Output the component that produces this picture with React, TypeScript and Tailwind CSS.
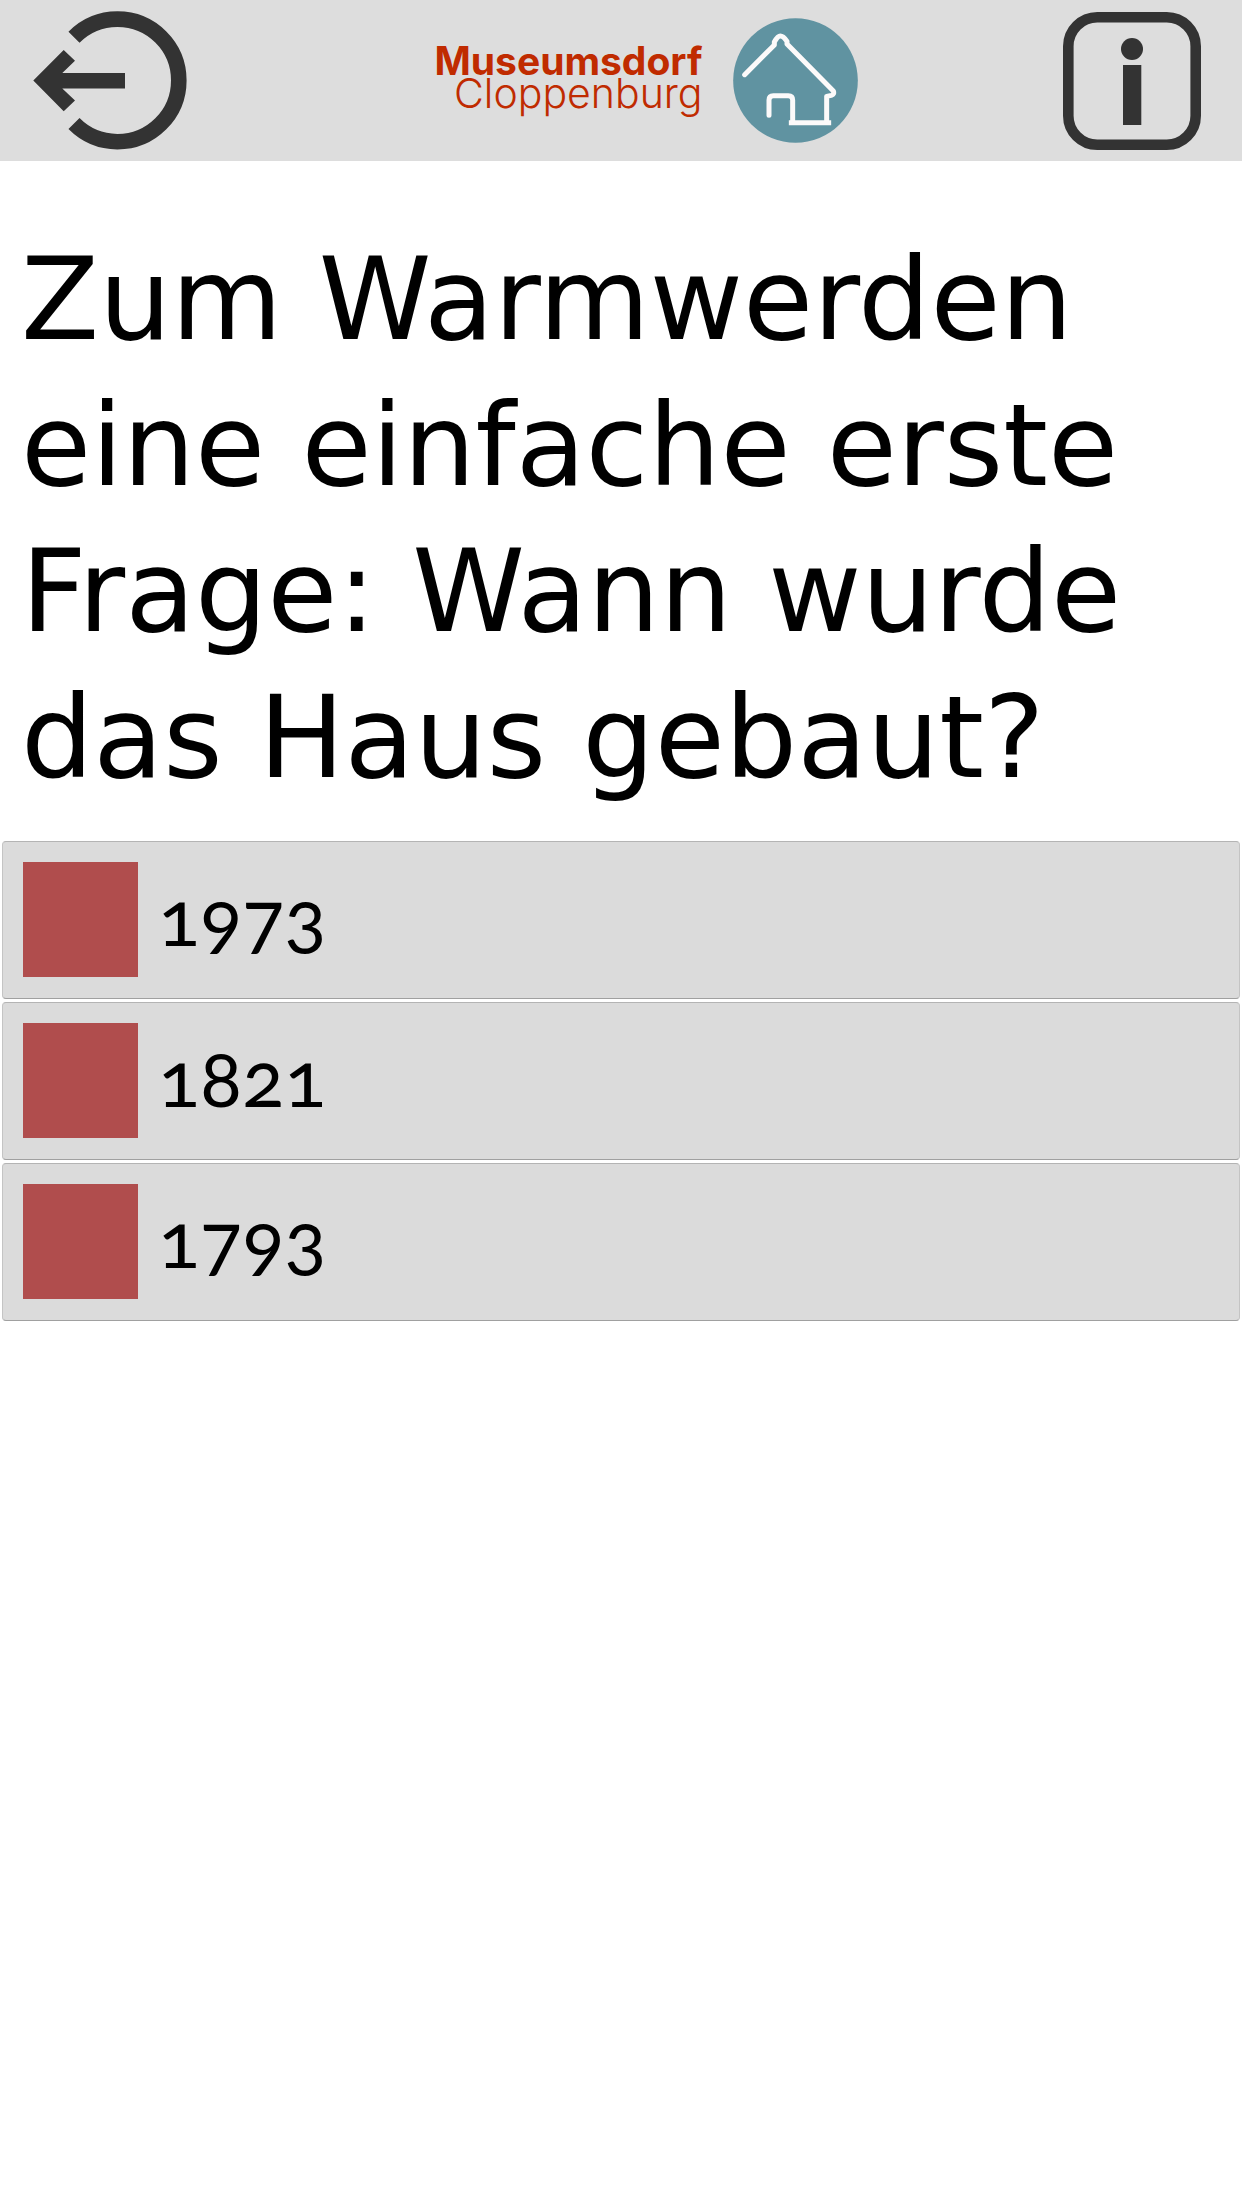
const answers = ["1973", "1821", "1793"];

function BackIcon() {
  return (
    <svg viewBox="33 11 154 139" className="h-[139px] w-[154px]" aria-hidden="true">
      <path d="M74 37.2A61.3 61.3 0 1 1 74 123.6" fill="none" stroke="#333333" strokeWidth="15.6" />
      <path d="M33.3 80.5L63.7 50L75 60.7L62.3 73H125V88.5H62.3L75 100.5L63.7 111.2Z" fill="#333333" />
    </svg>
  );
}

function InfoIcon() {
  return (
    <svg viewBox="0 0 138 138" className="h-[138px] w-[138px]" aria-hidden="true">
      <rect x="5.3" y="5.3" width="127.4" height="127.4" rx="29" fill="none" stroke="#333333" strokeWidth="10.6" />
      <circle cx="69" cy="37" r="11" fill="#333333" />
      <rect x="60" y="53" width="18.3" height="60" fill="#333333" />
    </svg>
  );
}

function HouseLogo() {
  return (
    <svg viewBox="99 55 375 375" className="h-[125px] w-[125px] shrink-0" aria-hidden="true">
      <circle cx="286.5" cy="242.5" r="187" fill="#6093a1" />
      <g fill="none" stroke="#fcfafa" strokeWidth="15" strokeLinecap="round" strokeLinejoin="round">
        <path d="M134 225L223 136V127Q233 109 241 109Q250 109 261 125V133L400 274Q404 284 394 287L380 290V363" />
        <path d="M207 347V301Q207 288 220 288H265Q278 288 278 301V363" />
        <path d="M274 369H386" strokeLinecap="square" />
      </g>
    </svg>
  );
}

export default function App() {
  return (
    <div className="min-h-screen bg-white text-black">
      <header className="flex h-[161px] items-center bg-[#dddddd] pr-[41px] pl-[33px]">
        <button type="button" aria-label="Zurück" className="shrink-0">
          <BackIcon />
        </button>
        <div className="flex flex-1 items-center justify-center gap-[30px] pl-[42px]">
          <p className="pb-[7px] text-right font-['Inter',sans-serif] leading-[33px] text-[#c02b00]">
            <span className="block text-[39px] font-bold">Museumsdorf</span>
            <span className="block text-[41px] font-light">Cloppenburg</span>
          </p>
          <HouseLogo />
        </div>
        <button type="button" aria-label="Information" className="shrink-0">
          <InfoIcon />
        </button>
      </header>
      <main>
        <h1 className="px-[21px] pt-[66px] font-['DejaVu_Sans',sans-serif] text-[114px] leading-[146px] font-normal">
          Zum Warmwerden eine einfache erste Frage: Wann wurde das Haus gebaut?
        </h1>
        <ul className="mt-[30px] flex flex-col gap-[3px] px-[2px]">
          {answers.map((answer) => (
            <li key={answer}>
              <button
                type="button"
                className="flex h-[158px] w-full items-start gap-[20px] rounded-[4px] border border-t-[#b4b4b4] border-r-[#c4c4c4] border-b-[#a0a0a0] border-l-[#c4c4c4] bg-[#dbdbdb] px-5 pt-5 text-left font-['Lato',sans-serif] text-[78px] leading-[108px] oldstyle-nums"
              >
                <span className="h-[115px] w-[115px] bg-[#b04d4d]" />
                <span>{answer}</span>
              </button>
            </li>
          ))}
        </ul>
      </main>
    </div>
  );
}
